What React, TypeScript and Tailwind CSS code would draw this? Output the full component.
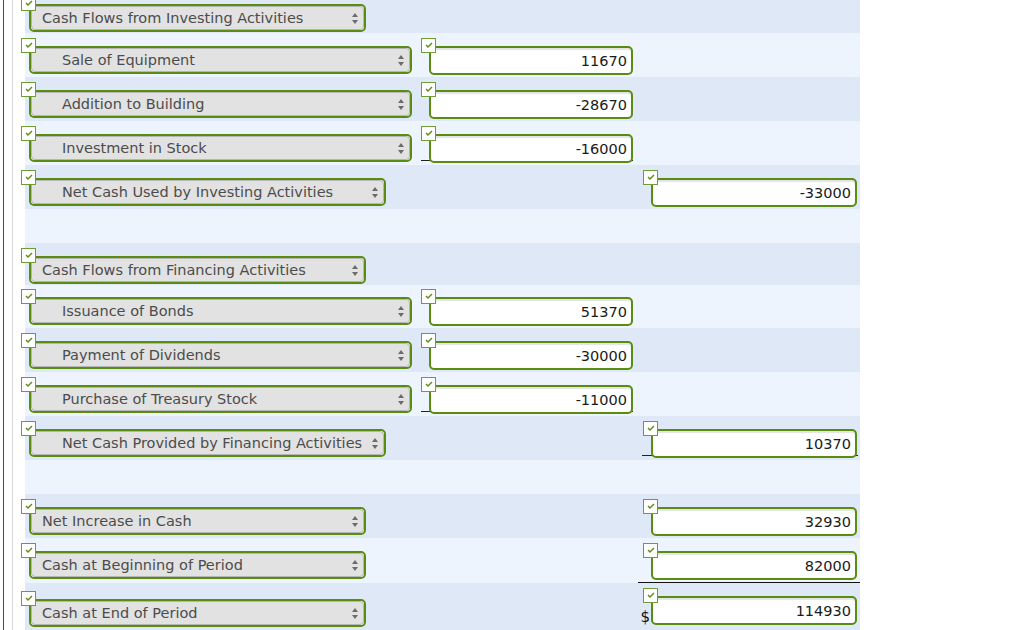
import React from "react";

type RowDef = {
  h: string;
  bg: "dark" | "light";
  padA?: string;
  padC?: string;
  label?: string;
  indent?: boolean;
  selW?: string;
  c1?: string;
  c1Line?: boolean;
  c2?: string;
  c2Line?: "mid" | "bottom";
  dollar?: boolean;
};

const rows: RowDef[] = [
  { h: "h-[33px]", bg: "dark", padA: "pt-[4px]", label: "Cash Flows from Investing Activities", selW: "w-[337px]" },
  { h: "h-[44px]", bg: "light", label: "Sale of Equipment", indent: true, selW: "w-[383px]", c1: "11670" },
  { h: "h-[44px]", bg: "dark", label: "Addition to Building", indent: true, selW: "w-[383px]", c1: "-28670" },
  { h: "h-[44px]", bg: "light", label: "Investment in Stock", indent: true, selW: "w-[383px]", c1: "-16000", c1Line: true },
  { h: "h-[44px]", bg: "dark", label: "Net Cash Used by Investing Activities", indent: true, selW: "w-[357px]", c2: "-33000" },
  { h: "h-[34px]", bg: "light" },
  { h: "h-[42px]", bg: "dark", label: "Cash Flows from Financing Activities", selW: "w-[337px]" },
  { h: "h-[43px]", bg: "light", padA: "pt-[12px]", padC: "pt-[12px]", label: "Issuance of Bonds", indent: true, selW: "w-[383px]", c1: "51370" },
  { h: "h-[44px]", bg: "dark", label: "Payment of Dividends", indent: true, selW: "w-[383px]", c1: "-30000" },
  { h: "h-[44px]", bg: "light", label: "Purchase of Treasury Stock", indent: true, selW: "w-[383px]", c1: "-11000", c1Line: true },
  { h: "h-[44px]", bg: "dark", label: "Net Cash Provided by Financing Activities", indent: true, selW: "w-[357px]", c2: "10370", c2Line: "mid" },
  { h: "h-[34px]", bg: "light" },
  { h: "h-[44px]", bg: "dark", label: "Net Increase in Cash", selW: "w-[337px]", c2: "32930" },
  { h: "h-[45px]", bg: "light", label: "Cash at Beginning of Period", selW: "w-[337px]", c2: "82000", c2Line: "bottom" },
  { h: "h-[50px]", bg: "dark", padA: "pt-[16px]", label: "Cash at End of Period", selW: "w-[337px]", c2: "114930", dollar: true },
];

function Tick() {
  return (
    <span className="absolute -left-[8px] -top-[8px] z-20 flex h-[15px] w-[15px] items-start justify-center border border-[#6f9c35] bg-white">
      <svg width="8" height="6" viewBox="0 0 8 6" className="mt-[3px]">
        <path d="M1 3 3 5 7 1" fill="none" stroke="#5a8c12" strokeWidth="1.4" />
      </svg>
    </span>
  );
}

function Arrows() {
  return (
    <svg width="6" height="11" viewBox="0 0 6 11" className="shrink-0">
      <path d="M3 0 6 4H0z" fill="#6b6b6b" />
      <path d="M0 7h6l-3 4z" fill="#6b6b6b" />
    </svg>
  );
}

function Picker({ label, indent, w }: { label: string; indent?: boolean; w: string }) {
  return (
    <div className={`relative shrink-0 ${w}`}>
      <Tick />
      <div className="h-[28px] rounded-[5px] border-2 border-[#5b8c12] bg-white">
        <div className="flex h-full items-center justify-between rounded-[4px] border border-[#b5b5b5] bg-[#e2e2e2] pr-[5px]">
          <span className={`whitespace-nowrap pt-px text-[#4c4c4c] ${indent ? "pl-[30px]" : "pl-[10px]"}`}>
            {label}
          </span>
          <Arrows />
        </div>
      </div>
    </div>
  );
}

function Amount({ value, w }: { value: string; w: string }) {
  return (
    <div className={`relative z-10 shrink-0 ${w}`}>
      <Tick />
      <div className="flex h-[29px] items-center justify-end rounded-[5px] border-2 border-[#5b8c12] bg-white pr-[4px] pt-[2px] text-[#1a1a1a] shadow-[inset_0_2px_1px_#e4e4e4]">
        {value}
      </div>
    </div>
  );
}

function Row({ r }: { r: RowDef }) {
  const bg = r.bg === "dark" ? "bg-[#dee8f6]" : "bg-[#eef4fd]";
  return (
    <div className={`flex ${r.h} ${bg}`}>
      <div className={`w-[396px] shrink-0 pl-[4px] ${r.padA ?? "pt-[13px]"}`}>
        {r.label && <Picker label={r.label} indent={r.indent} w={r.selW ?? "w-[337px]"} />}
      </div>
      <div className={`w-[217px] shrink-0 ${r.padC ?? "pt-[13px]"}`}>
        {r.c1 &&
          (r.c1Line ? (
            <div className="h-[27px] w-[212px] border-b border-[#222]">
              <div className="pl-[8px]">
                <Amount value={r.c1} w="w-[204px]" />
              </div>
            </div>
          ) : (
            <div className="pl-[8px]">
              <Amount value={r.c1} w="w-[204px]" />
            </div>
          ))}
      </div>
      <div
        className={`w-[222px] shrink-0 ${r.padC ?? "pt-[13px]"} ${
          r.c2Line === "bottom" ? "border-b border-[#111]" : ""
        }`}
      >
        {r.c2 &&
          (r.c2Line === "mid" ? (
            <div className="ml-[4px] h-[27px] w-[216px] border-b border-[#222]">
              <div className="pl-[9px]">
                <Amount value={r.c2} w="w-[206px]" />
              </div>
            </div>
          ) : r.dollar ? (
            <div className="flex items-end">
              <span className="w-[13px] pr-px text-right text-[15px] leading-none text-[#111]">$</span>
              <Amount value={r.c2} w="w-[206px]" />
            </div>
          ) : (
            <div className="pl-[13px]">
              <Amount value={r.c2} w="w-[206px]" />
            </div>
          ))}
      </div>
    </div>
  );
}

export default function App() {
  return (
    <div className="flex min-h-[630px] w-[1024px] overflow-hidden bg-white font-['DejaVu_Sans',Verdana,sans-serif] text-[14.5px]">
      <div className="w-[3px] shrink-0" />
      <div className="w-px shrink-0 bg-[#4a4a4a]" />
      <div className="w-[8px] shrink-0" />
      <div className="w-px shrink-0 bg-[#d6d6d6]" />
      <div className="w-[12px] shrink-0" />
      <div className="flex w-[835px] shrink-0 flex-col">
        {rows.map((r, i) => (
          <Row key={i} r={r} />
        ))}
      </div>
    </div>
  );
}
